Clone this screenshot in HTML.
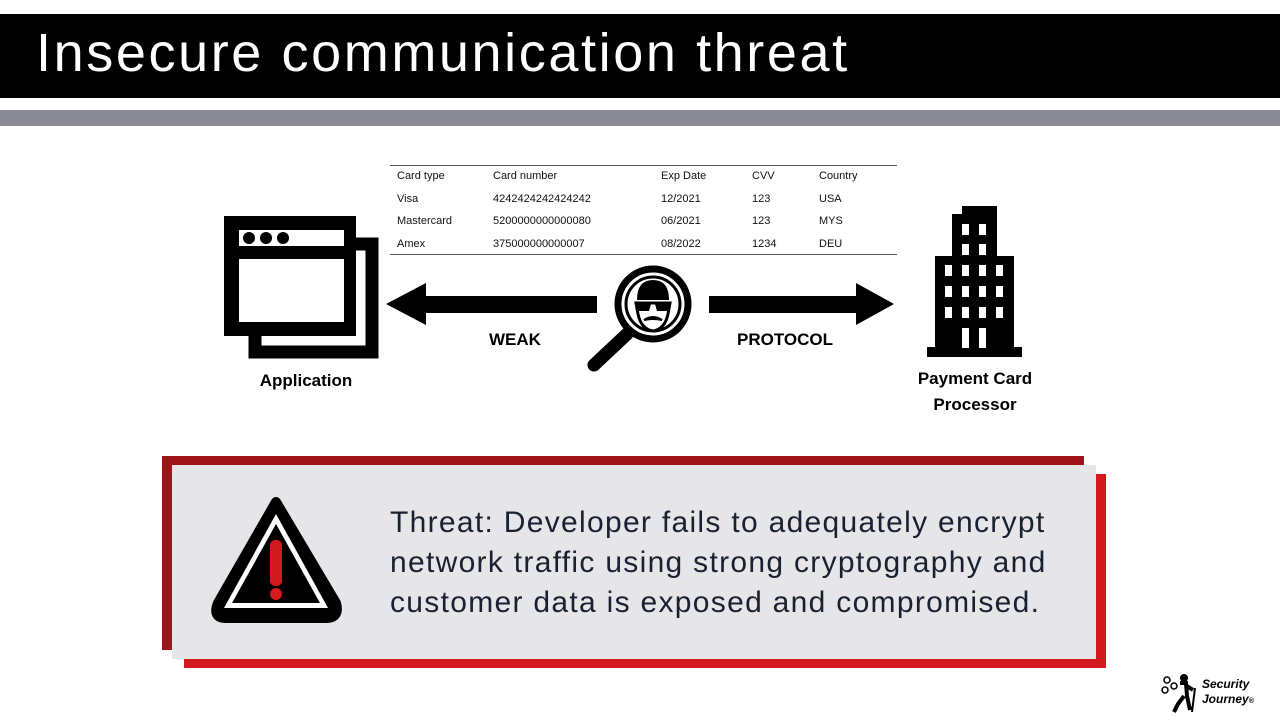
<!DOCTYPE html>
<html><head><meta charset="utf-8"><style>
body{margin:0;width:1280px;height:720px;background:#fff;position:relative;overflow:hidden;font-family:"Liberation Sans",sans-serif}
.a{position:absolute}
.tb td{font-size:11px;color:#111;padding:0;height:22.5px}
.lbl{font-weight:bold;font-size:17px;color:#000;text-align:center}
</style></head><body>
<div class="a" style="left:0;top:14px;width:1280px;height:84px;background:#000"></div>
<div class="a" style="left:36px;top:18px;color:#fff;font-size:54px;line-height:70px;letter-spacing:2.6px">Insecure communication threat</div>
<div class="a" style="left:0;top:110px;width:1280px;height:16px;background:#8a8b94"></div>

<div class="a" style="left:390px;top:165px;width:507px;height:88px;border-top:1px solid #555;border-bottom:1px solid #555">
<table class="tb" style="border-collapse:collapse;margin-left:7px;width:500px;margin-top:-1px">
<tr><td style="width:96px">Card type</td><td style="width:168px">Card number</td><td style="width:91px">Exp Date</td><td style="width:67px">CVV</td><td>Country</td></tr>
<tr><td>Visa</td><td>4242424242424242</td><td>12/2021</td><td>123</td><td>USA</td></tr>
<tr><td>Mastercard</td><td>5200000000000080</td><td>06/2021</td><td>123</td><td>MYS</td></tr>
<tr><td>Amex</td><td>375000000000007</td><td>08/2022</td><td>1234</td><td>DEU</td></tr>
</table></div>

<svg class="a" style="left:0;top:0" width="1280" height="720">
<rect x="255" y="244" width="117" height="108" fill="none" stroke="#000" stroke-width="13"/>
<rect x="224" y="216" width="132" height="120" fill="#000"/>
<rect x="239" y="230" width="105" height="16" fill="#fff"/>
<rect x="239" y="259" width="105" height="63" fill="#fff"/>
<circle cx="249" cy="238" r="6" fill="#000"/><circle cx="266" cy="238" r="6" fill="#000"/><circle cx="283" cy="238" r="6" fill="#000"/>
<rect x="420" y="296" width="177" height="17" fill="#000"/>
<polygon points="386,304 426,283 426,325" fill="#000"/>
<rect x="709" y="296" width="152" height="17" fill="#000"/>
<polygon points="894,304 856,283 856,325" fill="#000"/>
<line x1="627" y1="334" x2="594" y2="365" stroke="#000" stroke-width="13" stroke-linecap="round"/>
<circle cx="653" cy="304" r="35" fill="none" stroke="#000" stroke-width="7"/>
<circle cx="653" cy="304" r="27" fill="none" stroke="#000" stroke-width="3"/>
<path d="M637 300 Q637 280 653 280 Q669 280 669 300 Z" fill="#000"/>
<path d="M636 303 L670 303 L668 314 Q665 329 653 331 Q641 329 638 314 Z" fill="none" stroke="#000" stroke-width="3"/>
<path d="M637 304 L651 304 L649 311 L639 311 Z M655 304 L669 304 L667 311 L657 311 Z" fill="#000"/>
<path d="M644 320 Q653 314 662 320 Q653 318 644 320 Z" fill="#000" stroke="#000" stroke-width="2"/>
<!-- building -->
<rect x="962" y="206" width="35" height="10" fill="#000"/>
<rect x="952" y="214" width="45" height="44" fill="#000"/>
<rect x="935" y="256" width="79" height="98" fill="#000"/>
<rect x="927" y="347" width="95" height="10" fill="#000"/>
<g fill="#fff">
<rect x="962" y="224" width="7" height="11"/><rect x="979" y="224" width="7" height="11"/>
<rect x="962" y="244" width="7" height="11"/><rect x="979" y="244" width="7" height="11"/>
<rect x="945" y="265" width="7" height="11"/><rect x="962" y="265" width="7" height="11"/><rect x="979" y="265" width="7" height="11"/><rect x="996" y="265" width="7" height="11"/>
<rect x="945" y="286" width="7" height="11"/><rect x="962" y="286" width="7" height="11"/><rect x="979" y="286" width="7" height="11"/><rect x="996" y="286" width="7" height="11"/>
<rect x="945" y="307" width="7" height="11"/><rect x="962" y="307" width="7" height="11"/><rect x="979" y="307" width="7" height="11"/><rect x="996" y="307" width="7" height="11"/>
<rect x="962" y="328" width="7" height="20"/><rect x="979" y="328" width="7" height="20"/>
</g>
<rect x="184" y="474" width="922" height="194" fill="#d31a1e"/>
<rect x="162" y="456" width="922" height="194" fill="#a01419"/>
<rect x="172" y="465" width="924" height="194" fill="#e6e6e9"/>
<path d="M276 502 L336 603 Q340 618 326 618 L226 618 Q212 618 218 603 Z" fill="#000" stroke="#000" stroke-width="10" stroke-linejoin="round"/>
<path d="M276 514 L328 608 L224 608 Z" fill="#fff"/>
<path d="M276 524 L320 603 L232 603 Z" fill="#000"/>
<rect x="270" y="540" width="12" height="46" rx="5" fill="#d31a1e"/>
<circle cx="276" cy="594" r="6" fill="#d31a1e"/>
</svg>

<div class="a lbl" style="left:236px;top:371px;width:140px">Application</div>
<div class="a lbl" style="left:470px;top:330px;width:90px">WEAK</div>
<div class="a lbl" style="left:725px;top:330px;width:120px">PROTOCOL</div>
<div class="a lbl" style="left:900px;top:366px;width:150px;line-height:26px">Payment Card<br>Processor</div>

<div class="a" style="left:390px;top:503px;font-size:30px;line-height:40px;color:#1a2030;letter-spacing:1.3px;white-space:nowrap">Threat: Developer fails to adequately encrypt<br>network traffic using strong cryptography and<br>customer data is exposed and compromised.</div>

<svg class="a" style="left:1160px;top:672px" width="40" height="42">
<circle cx="7" cy="8" r="3" fill="none" stroke="#000" stroke-width="1.5"/><circle cx="5" cy="18" r="3" fill="none" stroke="#000" stroke-width="1.5"/><circle cx="14" cy="14" r="3" fill="none" stroke="#000" stroke-width="1.5"/>
<circle cx="24" cy="6" r="4" fill="#000"/>
<path d="M20 11 L26 11 L27 24 L30 38 M24 24 L18 32 L14 40 M27 14 L33 18" stroke="#000" stroke-width="4" fill="none"/>
<line x1="35" y1="16" x2="32" y2="40" stroke="#000" stroke-width="2"/>
</svg>
<div class="a" style="left:1202px;top:677px;font-size:12px;font-weight:bold;font-style:italic;line-height:15px;color:#000">Security<br>Journey<span style="font-size:7px">®</span></div>
</body></html>
